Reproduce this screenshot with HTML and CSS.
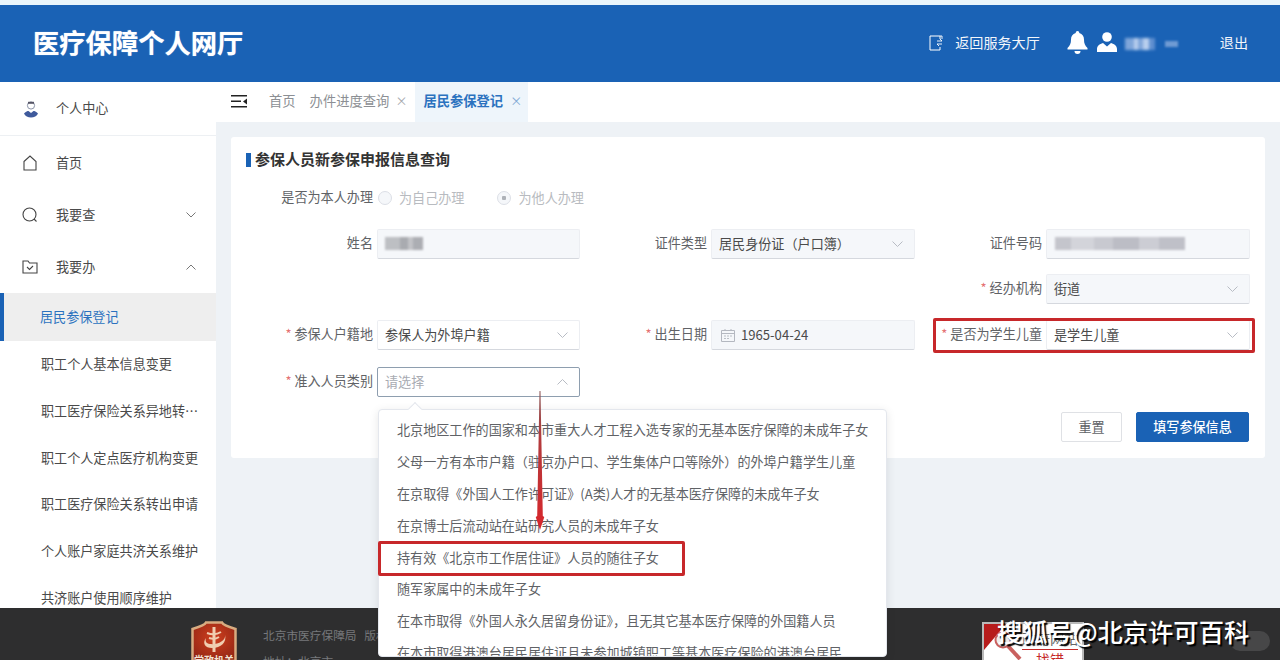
FILE: index.html
```html
<!DOCTYPE html>
<html lang="zh-CN">
<head>
<meta charset="utf-8">
<title>医疗保障个人网厅</title>
<link rel="stylesheet" href="styles.css">
</head>
<body>
<div class="page">
  <div class="strip"></div>
  <header class="header">
    <div class="brand">医疗保障个人网厅</div>
    <div class="header-right">
      <svg class="ic-return" width="16" height="16" viewBox="0 0 16 16" fill="none" stroke="#fff" stroke-width="1"><path d="M12 4V1H2v14h10v-3"/><path d="M12 1h2v3M9 6h5l-2-2M14 9H9l2 2" stroke-width=".9"/></svg>
      <span class="hdr-link">返回服务大厅</span>
      <svg class="ic-bell" width="21" height="23" viewBox="0 0 21 23" fill="#fff"><path d="M10.500 0a1.800 1.800 0 0 1 1.800 1.900c3.200.8 4.700 3.400 4.700 6.600 0 4 1 6 3.500 8.500v1.500H.5V17C3 14.500 4 12.500 4 8.500c0-3.200 1.500-5.800 4.700-6.600A1.800 1.800 0 0 1 10.500 0z"/><path d="M7.500 20h6a3 3 0 0 1-6 0z"/></svg>
      <svg class="ic-user" width="20" height="20" viewBox="0 0 20 20" fill="#fff"><circle cx="10" cy="5" r="4.800"/><path d="M0 20v-3c0-3 2.500-5 6-6l4 3.500L14 11c3.500 1 6 3 6 6v3z"/></svg>
      <span class="hdr-name" aria-hidden="true"><i class="nm-a"></i><i class="nm-b"></i></span>
      <span class="hdr-link hdr-exit">退出</span>
    </div>
  </header>
  <div class="body">
    <aside class="sidebar">
      <div class="profile">
        <svg class="side-ic" width="16" height="18" viewBox="0 0 16 18"><circle cx="8" cy="5.500" r="3.600" fill="#fff" stroke="#8a93a8"/><path d="M5 1.800h6v2H5z" fill="#556"/><path d="M1 13.500c2-2 3.500-2.500 4.500-2.500L8 13l2.500-2c1 0 2.500.5 4.500 2.500-1 2.500-4 4-7 4s-6-1.500-7-4z" fill="#3f5a9c"/></svg>
        <span>个人中心</span>
      </div>
      <nav class="nav">
        <div class="menu-row">
          <svg class="side-ic" width="16" height="16" viewBox="0 0 16 16" fill="none" stroke="#444" stroke-width="1.100"><path d="M2 6.500 8 1l6 5.500V15H2z"/></svg>
          <span>首页</span>
        </div>
        <div class="menu-row">
          <svg class="side-ic" width="16" height="16" viewBox="0 0 16 16" fill="none" stroke="#444" stroke-width="1.100"><circle cx="7.500" cy="7.500" r="6.500"/><path d="m12 12 2.500 2.500"/></svg>
          <span>我要查</span>
          <svg class="menu-chev" width="10" height="6" viewBox="0 0 10 6" fill="none" stroke="#777"><path d="m.5.500 4.500 4.500L9.500.500"/></svg>
        </div>
        <div class="menu-row">
          <svg class="side-ic" width="16" height="14" viewBox="0 0 16 14" fill="none" stroke="#444" stroke-width="1.100"><path d="M1 13V1h5l1.500 2H15v10z"/><path d="m5 7 2.500 2.500L11 6"/></svg>
          <span>我要办</span>
          <svg class="menu-chev" width="10" height="6" viewBox="0 0 10 6" fill="none" stroke="#777"><path d="m.5 5.500L5 1l4.500 4.500"/></svg>
        </div>
        <div class="sub sub-active">居民参保登记</div>
        <div class="sub">职工个人基本信息变更</div>
        <div class="sub">职工医疗保险关系异地转移申请</div>
        <div class="sub">职工个人定点医疗机构变更</div>
        <div class="sub">职工医疗保险关系转出申请</div>
        <div class="sub">个人账户家庭共济关系维护</div>
        <div class="sub">共济账户使用顺序维护</div>
      </nav>
    </aside>
    <main class="main">
      <div class="tabbar">
        <svg class="tab-toggle" width="16" height="13" viewBox="0 0 16 13" fill="#222"><path d="M0 0h16v1.500H0zM0 5.500h10V7H0zM0 11h16v1.500H0zM16 3.500v6l-4-3z"/></svg>
        <span class="tab tab-home">首页</span>
        <span class="tab">办件进度查询<em class="tab-x">×</em></span>
        <span class="tab tab-active">居民参保登记<em class="tab-x">×</em></span>
      </div>
      <section class="card">
        <h2 class="card-title">参保人员新参保申报信息查询</h2>
        <div class="radio-row">
          <span class="label">是否为本人办理</span>
          <span class="radio"><i class="dot dot-off"></i>为自己办理</span>
          <span class="radio"><i class="dot dot-on"></i>为他人办理</span>
        </div>
        <div class="form-grid">
          <span class="label">姓名</span>
          <div class="ctl ctl-off"><i class="blur blur-name"></i></div>
          <span class="label">证件类型</span>
          <div class="ctl ctl-off"><span>居民身份证（户口簿）</span><svg class="chev" width="11" height="6" viewBox="0 0 11 6" fill="none" stroke="#b8bcc4"><path d="m.5.500 5 5 5-5"/></svg></div>
          <span class="label">证件号码</span>
          <div class="ctl ctl-off"><i class="blur blur-id"></i></div>

          <span class="label label-c5"><b>*</b> 经办机构</span>
          <div class="ctl ctl-off"><span>街道</span><svg class="chev" width="11" height="6" viewBox="0 0 11 6" fill="none" stroke="#b8bcc4"><path d="m.5.500 5 5 5-5"/></svg></div>

          <span class="label"><b>*</b> 参保人户籍地</span>
          <div class="ctl"><span>参保人为外埠户籍</span><svg class="chev" width="11" height="6" viewBox="0 0 11 6" fill="none" stroke="#b8bcc4"><path d="m.5.500 5 5 5-5"/></svg></div>
          <span class="label"><b>*</b> 出生日期</span>
          <div class="ctl ctl-off ctl-date"><svg class="cal" width="14" height="14" viewBox="0 0 14 14" fill="none" stroke="#b4b8c0"><path d="M.5 2.500h13v11H.5zM.5 5.500h13M4 1v2M10 1v2"/><path d="M3 8h2M6 8h2M9 8h2M3 10.500h2M6 10.500h2" stroke-width=".9"/></svg><span>1965-04-24</span></div>
          <span class="label"><b>*</b> 是否为学生儿童</span>
          <div class="ctl"><span>是学生儿童</span><svg class="chev" width="11" height="6" viewBox="0 0 11 6" fill="none" stroke="#b8bcc4"><path d="m.5.500 5 5 5-5"/></svg></div>

          <span class="label"><b>*</b> 准入人员类别</span>
          <div class="ctl ctl-focus"><span class="placeholder">请选择</span><svg class="chev" width="11" height="6" viewBox="0 0 11 6" fill="none" stroke="#b8bcc4"><path d="m.5 5.500 5-5 5 5"/></svg></div>
        </div>
        <div class="actions">
          <button class="btn" type="button">重置</button>
          <button class="btn btn-primary" type="button">填写参保信息</button>
        </div>
      </section>
    </main>
  </div>
  <footer class="footer">
    <svg class="gov-badge" width="46" height="40" viewBox="0 0 46 40">
      <defs><radialGradient id="badgeRed" cx=".5" cy=".4" r=".7"><stop offset="0" stop-color="#cf3f1e"/><stop offset="1" stop-color="#8f2414"/></radialGradient></defs>
      <path d="M1.500 8C8 6 14 4 15 1.500h16C32 4 38 6 44.500 8v32h-43z" fill="url(#badgeRed)" stroke="#d8ab80" stroke-width="2.500"/>
      <path d="M23 6v25" fill="none" stroke="#f0cdb0" stroke-width="3"/>
      <path d="M16 12c4 1.500 10 1.500 14-1M18 17c3 1 7 1 10-1" fill="none" stroke="#f0cdb0" stroke-width="2"/>
      <path d="M34 14c1 6-8 10-15 9-4-.5-5-3-4-6-4 5-1 10 6 10 9 0 15-6 13-13z" fill="#f0cdb0"/>
      <text class="badge-text" x="23" y="43" text-anchor="middle">党政机关</text>
    </svg>
    <div class="foot-text">
      <div>北京市医疗保障局&nbsp;&nbsp;&nbsp;版权所有</div>
      <div class="foot-line2">地址：北京市</div>
    </div>
    <div class="find-error">
      <svg class="find-ic" width="40" height="38" viewBox="0 0 40 38"><path d="M0 0h22L0 26z" fill="#b71c1c"/><circle cx="19" cy="16" r="7.500" fill="#eee" stroke="#c9615f" stroke-width="2"/><path d="m24 22 12 13" stroke="#c9615f" stroke-width="4"/></svg>
      <div class="find-text"><div class="find-top">政府网站</div><div class="find-red">找错</div></div>
    </div>
  </footer>

  <div class="dropdown">
    <div class="dd-item">北京地区工作的国家和本市重大人才工程入选专家的无基本医疗保障的未成年子女</div>
    <div class="dd-item">父母一方有本市户籍（驻京办户口、学生集体户口等除外）的外埠户籍学生儿童</div>
    <div class="dd-item">在京取得《外国人工作许可证》(A类)人才的无基本医疗保障的未成年子女</div>
    <div class="dd-item">在京博士后流动站在站研究人员的未成年子女</div>
    <div class="dd-item">持有效《北京市工作居住证》人员的随往子女</div>
    <div class="dd-item">随军家属中的未成年子女</div>
    <div class="dd-item">在本市取得《外国人永久居留身份证》，且无其它基本医疗保障的外国籍人员</div>
    <div class="dd-item">在本市取得港澳台居民居住证且未参加城镇职工等基本医疗保险的港澳台居民</div>
  </div>
  <i class="dd-caret"></i>
  <i class="mark mark-student"></i>
  <i class="mark mark-option"></i>
  <svg class="arrow" width="12" height="140" viewBox="0 0 12 140">
    <defs><linearGradient id="arrowFill" x1="0" y1="0" x2="0" y2="1"><stop offset="0" stop-color="#8d5a5a"/><stop offset=".35" stop-color="#b33a3c"/><stop offset="1" stop-color="#d8262b"/></linearGradient></defs>
    <path d="M5.500 0h1L8.800 125l1.500 1L6 139 1.700 126l1.500-1z" fill="url(#arrowFill)"/>
  </svg>
  <div class="wm-badge"></div>
  <div class="watermark">搜狐号@北京许可百科</div>
</div>
</body>
</html>
```
FILE: styles.css
```css
* { box-sizing: border-box; }
html, body { margin: 0; padding: 0; }
body {
  font-family: "Noto Sans CJK SC", "Liberation Sans", sans-serif;
  font-size: 13.100px;
  color: #606266;
  background: #fff;
}
i, em { font-style: normal; }
.page {
  position: relative;
  width: 1280px;
  height: 660px;
  overflow: hidden;
  display: flex;
  flex-direction: column;
}
.strip { height: 5px; background: #eaf5fb; flex: none; }

/* header */
.header {
  flex: none;
  height: 77px;
  background: #1a62b5;
  display: flex;
  align-items: center;
  justify-content: space-between;
  padding: 0 32px 0 33px;
  color: #fff;
}
.brand {
  font-size: 26.300px;
  font-weight: 700;
  line-height: 36px;
  padding-bottom: 4px;
  text-shadow: 0 0 1px rgba(255,255,255,.6);
}
.header-right { display: flex; align-items: center; }
.hdr-link { font-size: 14.100px; line-height: 20px; padding-bottom: 4px; color: #f2f6fb; }
.ic-return { margin-right: 11px; margin-top: -2px; }
.ic-bell { margin-left: 27px; margin-top: -2px; }
.ic-user { margin-left: 9px; margin-top: -4px; }
.hdr-name { display: flex; align-items: center; margin-left: 8px; width: 55px; height: 18px; }
.nm-a { width: 30px; height: 12px; background: linear-gradient(90deg, #7fa6da 0 30%, #b9cfee 30% 45%, #7fa6da 45% 60%, #b9cfee 60% 80%, #5f8fd0 80%); filter: blur(1.500px); }
.nm-b { width: 13px; height: 6px; background: #6f9bd4; margin-left: 10px; filter: blur(1px); }
.hdr-exit { margin-left: 40px; margin-right: 0; }

/* layout */
.body { flex: 1; min-height: 0; display: flex; overflow: hidden; }
.sidebar { flex: none; width: 216px; background: #fff; overflow: hidden; color: #4a4a4a; }
.profile {
  height: 54px;
  border-bottom: 1px solid #edf0f3;
  display: flex;
  align-items: center;
  padding-left: 23px;
}
.profile span { padding-bottom: 2px; }
.side-ic { width: 16px; margin-right: 17px; flex: none; }
.nav { padding-top: 1px; }
.menu-row {
  height: 52px;
  display: flex;
  align-items: center;
  padding-left: 22px;
  position: relative;
}
.menu-row span { padding: 0 0 2px 1px; }
.menu-chev { margin-left: auto; margin-right: 20px; }
.sub {
  height: 46.800px;
  line-height: 45px;
  padding: 0 14px 0 41px;
  white-space: nowrap;
  overflow: hidden;
  text-overflow: ellipsis;
}
.sub-active {
  height: 48px;
  line-height: 48px;
  background: #eeeeee;
  color: #2b72bf;
  border-left: 4px solid #1a62b5;
  padding-left: 36px;
}

.main { flex: 1; min-width: 0; background: #eef2f6; }
.tabbar {
  height: 40px;
  background: #fff;
  display: flex;
  align-items: stretch;
  padding-left: 15px;
  color: #8c8f94;
  font-size: 13.300px;
}
.tab-toggle { align-self: center; margin-right: 22px; margin-top: -2px; }
.tab { display: flex; align-items: center; padding-bottom: 4px; white-space: nowrap; }
.tab-home { margin-right: 14px; }
.tab-x { font-size: 12px; color: #a5a8ad; margin-left: 6px; width: 10px; text-align: center; }
.tab-active {
  margin-left: 10px;
  padding: 0 8px 4px 8px;
  background: #eef5fb;
  color: #2b72bf;
  font-weight: 700;
  width: 113px;
}
.tab-active .tab-x { font-weight: 400; margin-left: 7px; color: #7fa8d4; }

/* card */
.card {
  margin: 15px 15px 0;
  height: 321px;
  background: #fff;
  border-radius: 3px;
  padding: 11px 16px 16px 0;
}
.card-title {
  margin: 0 0 0 15px;
  padding-left: 9px;
  font-size: 15px;
  line-height: 22px;
  font-weight: 700;
  color: #333;
  position: relative;
}
.card-title::before {
  content: "";
  position: absolute;
  left: 0;
  top: 5px;
  width: 5px;
  height: 14px;
  background: #1a62b5;
}
.label {
  font-size: 13.100px;
  line-height: 28px;
  color: #606266;
  text-align: right;
  padding-right: 4px;
  white-space: nowrap;
}
.label b { color: #e57373; font-weight: 400; }
.label-c5 { grid-column: 5; }
.radio-row { display: flex; align-items: center; height: 22px; margin-top: 16px; }
.radio-row .label { width: 146px; flex: none; line-height: 22px; }
.radio { display: flex; align-items: center; color: #b8bbc0; margin-right: 32px; }
.dot {
  width: 14px;
  height: 14px;
  margin: 2px 7px 0 1px;
  border: 1px solid #dcdfe6;
  border-radius: 50%;
  background: #f5f7fa;
}
.dot-on { background: radial-gradient(circle, #aeb2b8 0 2px, #f5f7fa 2.500px); }
.form-grid {
  margin-top: 21px;
  display: grid;
  grid-template-columns: 146px 203px 131px 204px 131px 204px;
  grid-template-rows: 30px 31px 32px 30px;
  row-gap: 15px;
  align-items: start;
}
.ctl {
  height: 30px;
  background: #fff;
  border: 1px solid #eceef2;
  border-bottom-color: #d5d8de;
  border-radius: 2px;
  display: flex;
  align-items: center;
  padding: 0 11px 2px 7px;
  font-size: 13.100px;
  color: #4a4a4a;
}
.ctl-off { background: #f5f7fa; }
.ctl-focus { border-color: #8e9eaf; }
.ctl-date { padding-left: 9px; }
.cal { margin: 2px 6px 0 0; flex: none; }
.placeholder { color: #a8abb2; }
.chev { margin: 2px 0 0 auto; }
.blur { display: block; filter: blur(1.200px); margin-top: 1px; }
.blur-name {
  width: 38px;
  height: 13px;
  background: linear-gradient(90deg, #bdbfc3 0 40%, #a9abb0 40% 60%, #c2c3c7 60% 75%, #acaeb3 75%);
}
.blur-id {
  width: 130px;
  height: 13px;
  margin-left: 1px;
  background: linear-gradient(90deg, #c4c5cc 0 12%, #d3d4da 12% 30%, #c8c9d0 30% 45%, #bcbdc5 45% 65%, #cccdd4 65% 80%, #bfc0c8 80%);
}
.actions { display: flex; justify-content: flex-end; gap: 14px; margin-top: 15px; }
.btn {
  font: inherit;
  height: 30px;
  width: 61px;
  border: 1px solid #dfe1e5;
  border-radius: 2px;
  background: #fff;
  color: #606266;
  padding: 0 0 2px;
}
.btn-primary {
  width: 113px;
  border-color: #1a62b5;
  background: #1a62b5;
  color: #fff;
  font-weight: 500;
}

/* footer */
.footer {
  flex: none;
  height: 52px;
  background: #2e2e2f;
  display: flex;
  align-items: flex-start;
  padding-left: 191px;
  position: relative;
}
.gov-badge { margin-top: 13px; flex: none; }
.badge-text { font-size: 10px; font-weight: 700; fill: #f3e3d4; }
.foot-text { margin: 17px 0 0 26px; font-size: 11.700px; line-height: 20px; color: #77797c; white-space: nowrap; }
.foot-line2 { margin-top: 6px; }
.find-error {
  position: absolute;
  left: 982px;
  top: 14px;
  width: 102px;
  height: 44px;
  background: #fff;
  border: 2px solid #b9b9b9;
  display: flex;
}
.find-ic { flex: none; }
.find-text { margin-left: -2px; font-size: 14px; text-align: center; color: #666; white-space: nowrap; }
.find-top { line-height: 22px; padding-top: 3px; height: 25px; }
.find-red { color: #c62828; border-top: 1px solid #c62828; line-height: 18px; }

/* dropdown */
.dropdown {
  position: absolute;
  left: 378px;
  top: 409px;
  width: 509px;
  height: 248px;
  background: #fff;
  border: 1px solid #e4e7ed;
  border-radius: 4px;
  box-shadow: 0 2px 10px rgba(0,0,0,.1);
  padding-top: 4px;
  overflow: hidden;
}
.dd-item {
  height: 31.900px;
  line-height: 31.900px;
  padding-left: 18px;
  font-size: 13.100px;
  color: #606266;
  white-space: nowrap;
}
.dd-caret {
  position: absolute;
  left: 410px;
  top: 404px;
  width: 10px;
  height: 10px;
  background: #fff;
  border: 1px solid #e4e7ed;
  border-width: 1px 0 0 1px;
  transform: rotate(45deg);
}
.mark {
  position: absolute;
  border: 3px solid #c7282a;
  border-radius: 2px;
}
.mark-student { left: 933px; top: 318px; width: 322px; height: 35px; }
.mark-option { left: 378px; top: 541px; width: 307px; height: 35px; }
.arrow { position: absolute; left: 534px; top: 391px; }
.wm-badge {
  position: absolute;
  left: 1230px;
  top: 631px;
  width: 40px;
  height: 20px;
  border-radius: 10px;
  background: rgba(255,255,255,.12);
}
.watermark {
  position: absolute;
  left: 997px;
  top: 613px;
  font-size: 25.300px;
  line-height: 36px;
  font-weight: 500;
  color: #fff;
  white-space: nowrap;
  text-shadow: 2px 2px 1px #000;
}
```
